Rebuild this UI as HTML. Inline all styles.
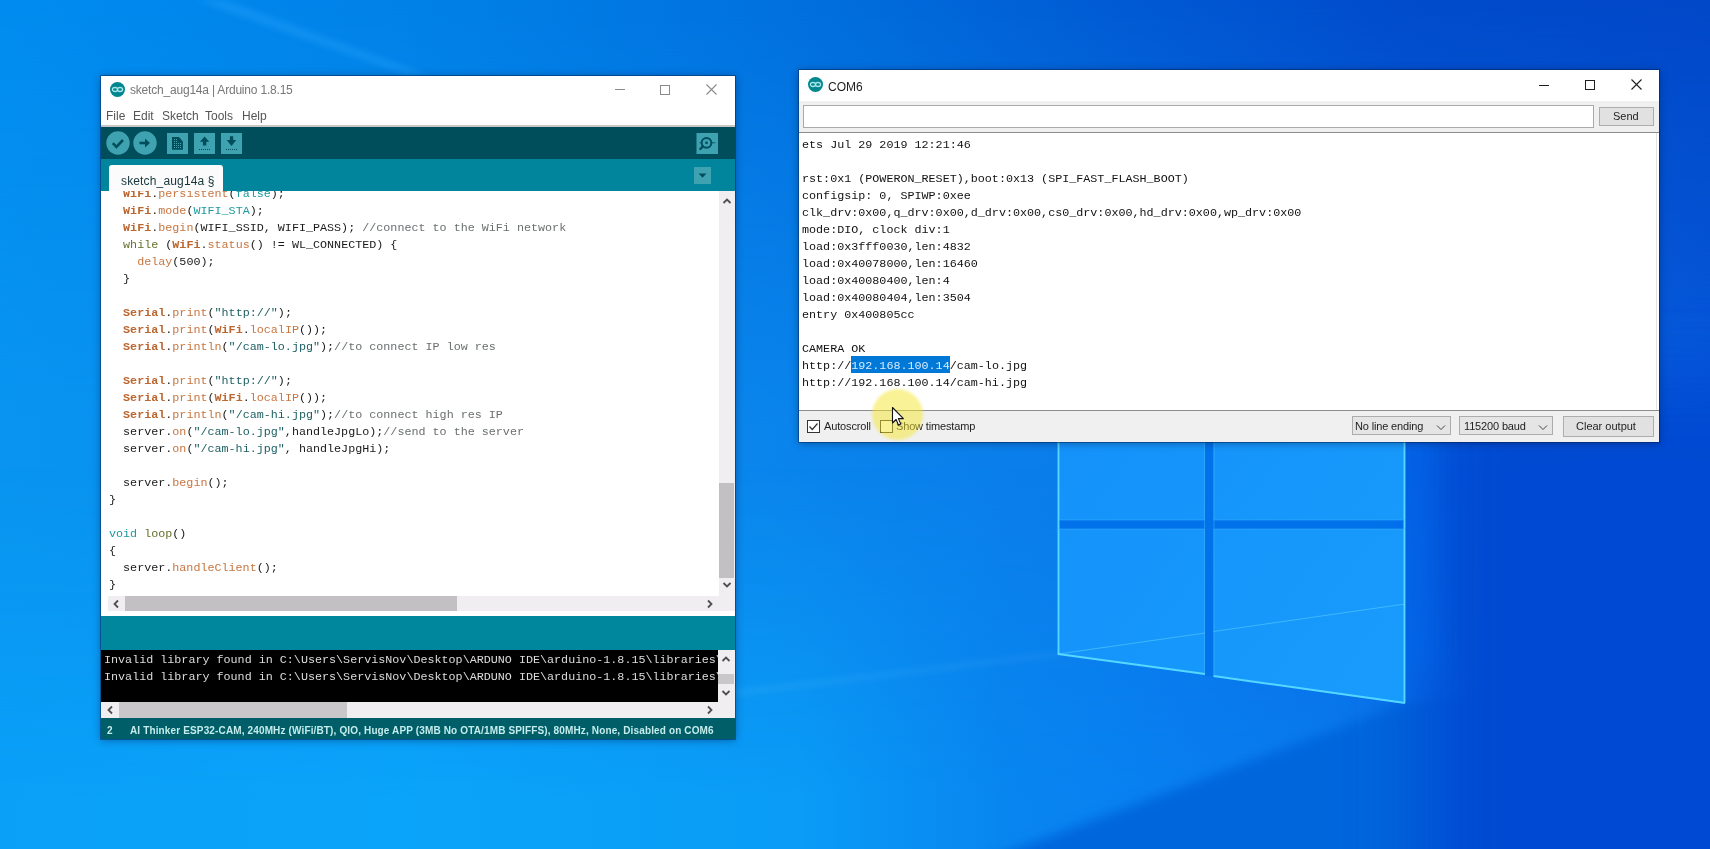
<!DOCTYPE html>
<html><head><meta charset="utf-8">
<style>
*{box-sizing:border-box}
html,body{margin:0;padding:0}
body{width:1710px;height:849px;overflow:hidden;position:relative;font-family:"Liberation Sans",sans-serif;background:#0a72dc;-webkit-font-smoothing:antialiased}
.a{position:absolute}
#ard,#com{will-change:transform}
.mono{font-family:"Liberation Mono",monospace;font-size:11.72px;line-height:17px;white-space:pre}
.sans{font-family:"Liberation Sans",sans-serif;white-space:pre}
/* code colours */
.k{color:#bc6630;font-weight:bold}
.f{color:#c87640}
.l{color:#1a9a9e}
.s{color:#1d5f62}
.c{color:#6a6f70}
.p{color:#66702a}
</style></head><body>

<!-- ============ WALLPAPER ============ -->
<svg class="a" style="left:0;top:0" width="1710" height="849" viewBox="0 0 1710 849">
  <defs>
    <linearGradient id="gTop" gradientUnits="userSpaceOnUse" x1="0" y1="0" x2="1710" y2="0">
      <stop offset="0" stop-color="rgb(0,140,240)"/>
      <stop offset="0.234" stop-color="rgb(0,130,232)"/>
      <stop offset="0.468" stop-color="rgb(0,112,222)"/>
      <stop offset="0.643" stop-color="rgb(0,92,212)"/>
      <stop offset="0.819" stop-color="rgb(0,76,204)"/>
      <stop offset="1" stop-color="rgb(0,72,200)"/>
    </linearGradient>
    <linearGradient id="gMid" gradientUnits="userSpaceOnUse" x1="0" y1="0" x2="1710" y2="0">
      <stop offset="0" stop-color="rgb(8,148,240)"/>
      <stop offset="0.234" stop-color="rgb(8,142,238)"/>
      <stop offset="0.468" stop-color="rgb(10,132,236)"/>
      <stop offset="0.643" stop-color="rgb(10,124,234)"/>
      <stop offset="0.822" stop-color="rgb(10,104,228)"/>
      <stop offset="1" stop-color="rgb(6,90,220)"/>
    </linearGradient>
    <linearGradient id="gBot" gradientUnits="userSpaceOnUse" x1="0" y1="0" x2="1710" y2="0">
      <stop offset="0" stop-color="rgb(10,160,248)"/>
      <stop offset="0.234" stop-color="rgb(10,164,250)"/>
      <stop offset="0.468" stop-color="rgb(10,156,246)"/>
      <stop offset="0.585" stop-color="rgb(8,134,240)"/>
      <stop offset="0.702" stop-color="rgb(8,126,240)"/>
      <stop offset="0.822" stop-color="rgb(8,120,236)"/>
      <stop offset="1" stop-color="rgb(8,110,230)"/>
    </linearGradient>
    <linearGradient id="mMid" gradientUnits="userSpaceOnUse" x1="0" y1="0" x2="0" y2="849">
      <stop offset="0" stop-color="#fff" stop-opacity="0"/>
      <stop offset="0.5" stop-color="#fff" stop-opacity="1"/>
      <stop offset="1" stop-color="#fff" stop-opacity="1"/>
    </linearGradient>
    <linearGradient id="mBot" gradientUnits="userSpaceOnUse" x1="0" y1="0" x2="0" y2="849">
      <stop offset="0" stop-color="#fff" stop-opacity="0"/>
      <stop offset="0.55" stop-color="#fff" stop-opacity="0"/>
      <stop offset="0.94" stop-color="#fff" stop-opacity="1"/>
      <stop offset="1" stop-color="#fff" stop-opacity="1"/>
    </linearGradient>
    <mask id="maskMid"><rect width="1710" height="849" fill="url(#mMid)"/></mask>
    <mask id="maskBot"><rect width="1710" height="849" fill="url(#mBot)"/></mask>
    <linearGradient id="pane" gradientUnits="userSpaceOnUse" x1="1058" y1="450" x2="1405" y2="700">
      <stop offset="0" stop-color="rgb(20,146,250)"/>
      <stop offset="1" stop-color="rgb(24,156,252)"/>
    </linearGradient>
    <filter id="blur3" x="-20%" y="-20%" width="140%" height="140%"><feGaussianBlur stdDeviation="3"/></filter>
    <filter id="blur60" x="-50%" y="-50%" width="200%" height="200%"><feGaussianBlur stdDeviation="38"/></filter>
    <filter id="blur6" x="-20%" y="-20%" width="140%" height="140%"><feGaussianBlur stdDeviation="6"/></filter>
    <filter id="blur12" x="-100%" y="-50%" width="300%" height="200%"><feGaussianBlur stdDeviation="12"/></filter>
    <filter id="blur1"><feGaussianBlur stdDeviation="0.7"/></filter>
  </defs>
  <rect width="1710" height="849" fill="url(#gTop)"/>
  <rect width="1710" height="849" fill="url(#gMid)" mask="url(#maskMid)"/>
  <rect width="1710" height="849" fill="url(#gBot)" mask="url(#maskBot)"/>
  <!-- faint light streaks top-left -->
  <polygon points="195,0 225,0 430,76 410,76" fill="#2aa8ff" opacity="0.35" filter="url(#blur3)"/>
  <!-- floor: dark wedge right of beam -->
  <polygon points="1405,703 1760,650 1760,900 880,900" fill="rgb(6,102,220)" filter="url(#blur6)"/>
  <!-- right dark region -->
  <rect x="1425" y="380" width="400" height="600" fill="rgb(4,74,210)" filter="url(#blur60)"/>
  <!-- floor beam line -->
  <polygon points="735,690 1058,652 1058,656 735,696" fill="#7ad8ff" opacity="0.12" filter="url(#blur3)"/>
  <!-- logo gaps -->
  <rect x="1205" y="300" width="8.5" height="376" fill="rgb(2,114,234)"/>
  <rect x="1058" y="520" width="347" height="9" fill="rgb(2,114,234)"/>
  <rect x="1395" y="420" width="40" height="250" fill="rgb(6,104,238)" opacity="0.45" filter="url(#blur12)"/>
  <!-- logo panes -->
  <polygon points="1058,380 1205,355 1205,520 1058,520" fill="url(#pane)"/>
  <polygon points="1213.5,352 1405,320 1405,520 1213.5,520" fill="url(#pane)"/>
  <polygon points="1058,529 1205,529 1205,674 1058,654" fill="url(#pane)"/>
  <polygon points="1213.5,529 1405,529 1405,703 1213.5,676" fill="url(#pane)"/>
  <g filter="url(#blur1)">
  <g stroke="#5adcff" stroke-width="1.9" fill="none" opacity="0.95">
    <line x1="1058.5" y1="380" x2="1058.5" y2="655"/>
    <line x1="1058" y1="654" x2="1205" y2="674"/>
    <line x1="1213.5" y1="676" x2="1405" y2="703"/>
    <line x1="1404.5" y1="320" x2="1404.5" y2="703"/>
  </g>
  <g stroke="#40b8ff" stroke-width="1.1" fill="none" opacity="0.45">
    <line x1="1204.5" y1="355" x2="1204.5" y2="674"/>
    <line x1="1214" y1="352" x2="1214" y2="676"/>
    <line x1="1058" y1="520" x2="1205" y2="520"/>
    <line x1="1213.5" y1="520" x2="1405" y2="520"/>
    <line x1="1058" y1="529" x2="1205" y2="529"/>
    <line x1="1213.5" y1="529" x2="1405" y2="529"/>
  </g>
  <g stroke="#6fdcff" stroke-width="1" opacity="0.45">
    <line x1="1058" y1="654" x2="1205" y2="633"/>
    <line x1="1213.5" y1="631.5" x2="1405" y2="604"/>
  </g>
  </g>
</svg>

<!-- ============ ARDUINO WINDOW ============ -->
<div id="ard" class="a" style="left:101px;top:76px;width:634px;height:663px;background:#fff;box-shadow:0 0 0 1px rgba(0,30,80,.45),0 1px 8px rgba(0,20,60,.45);overflow:hidden">
  <!-- title bar -->
  <svg class="a" style="left:9px;top:6px" width="15" height="15" viewBox="0 0 15 15">
    <circle cx="7.5" cy="7.5" r="7.5" fill="#00868e"/>
    <ellipse cx="5" cy="7.5" rx="2.6" ry="2" fill="none" stroke="#a8e6ea" stroke-width="1.3"/>
    <ellipse cx="10" cy="7.5" rx="2.6" ry="2" fill="none" stroke="#a8e6ea" stroke-width="1.3"/>
  </svg>
  <div class="a sans" style="left:29px;top:6px;font-size:12px;line-height:16px;color:#777;letter-spacing:-0.2px">sketch_aug14a | Arduino 1.8.15</div>
  <div class="a" style="left:514px;top:13px;width:10px;height:1px;background:#8a8a8a"></div>
  <div class="a" style="left:559px;top:8.5px;width:10px;height:10px;border:1px solid #8a8a8a"></div>
  <svg class="a" style="left:605px;top:8px" width="11" height="11" viewBox="0 0 11 11"><path d="M0.5 0.5L10.5 10.5M10.5 0.5L0.5 10.5" stroke="#8a8a8a" stroke-width="1.1"/></svg>
  <!-- menu -->
  <div class="a sans" style="left:5px;top:32px;font-size:12px;line-height:16px;color:#555">File</div>
  <div class="a sans" style="left:32px;top:32px;font-size:12px;line-height:16px;color:#555">Edit</div>
  <div class="a sans" style="left:61px;top:32px;font-size:12px;line-height:16px;color:#555">Sketch</div>
  <div class="a sans" style="left:104px;top:32px;font-size:12px;line-height:16px;color:#555">Tools</div>
  <div class="a sans" style="left:141px;top:32px;font-size:12px;line-height:16px;color:#555">Help</div>
  <div class="a" style="left:0;top:49px;width:634px;height:1.5px;background:#c9c6c6"></div>
  <!-- toolbar -->
  <div class="a" style="left:0;top:50.5px;width:634px;height:32px;background:#004e5b"></div>
  <svg class="a" style="left:0;top:50px" width="634" height="33" viewBox="0 0 634 33">
    <circle cx="17" cy="17" r="11.7" fill="#3fa2b1"/>
    <path d="M11.8 17.2l3.6 3.6 6.6-6.8" fill="none" stroke="#004e5b" stroke-width="2.6"/>
    <circle cx="44" cy="17" r="11.7" fill="#3fa2b1"/>
    <path d="M38.5 17h7.5" stroke="#004e5b" stroke-width="2.6"/><path d="M44 12.5l5 4.5-5 4.5z" fill="#004e5b"/>
    <rect x="66" y="7" width="21" height="21" fill="#3fa2b1"/>
    <path d="M71 11h6.9l4 4.5v8.3h-10.9z" fill="#004e5b"/>
    <g fill="#3fa2b1"><rect x="73" y="13" width="1" height="1"/><rect x="75" y="13" width="1" height="1"/><rect x="73" y="15" width="1" height="1"/><rect x="75" y="15" width="1" height="1"/><rect x="73" y="17" width="1" height="1"/><rect x="75" y="17" width="1" height="1"/><rect x="77" y="17" width="1" height="1"/><rect x="79" y="17" width="1" height="1"/><rect x="73" y="19" width="1" height="1"/><rect x="75" y="19" width="1" height="1"/><rect x="77" y="19" width="1" height="1"/><rect x="79" y="19" width="1" height="1"/><rect x="73" y="21" width="1" height="1"/><rect x="75" y="21" width="1" height="1"/><rect x="77" y="21" width="1" height="1"/><rect x="79" y="21" width="1" height="1"/></g>
    <rect x="93" y="7" width="21" height="21" fill="#3fa2b1"/>
    <path d="M103.6 10.4l4.7 5.3h-3v3.9h-3.4v-3.9h-3z" fill="#004e5b"/>
    <g fill="#004e5b"><rect x="98" y="23" width="1" height="1"/><rect x="100" y="23" width="1" height="1"/><rect x="102" y="23" width="1" height="1"/><rect x="104" y="23" width="1" height="1"/><rect x="106" y="23" width="1" height="1"/><rect x="108" y="23" width="1" height="1"/></g>
    <rect x="120" y="7" width="21" height="21" fill="#3fa2b1"/>
    <path d="M130.5 19.9l4.8-5.8h-3.1v-3.9h-3.3v3.9h-3.2z" fill="#004e5b"/>
    <g fill="#004e5b"><rect x="125" y="23" width="1" height="1"/><rect x="127" y="23" width="1" height="1"/><rect x="129" y="23" width="1" height="1"/><rect x="131" y="23" width="1" height="1"/><rect x="133" y="23" width="1" height="1"/><rect x="135" y="23" width="1" height="1"/></g>
    <rect x="595.5" y="7" width="21.5" height="21" fill="#3fa2b1"/>
    <circle cx="605.5" cy="16.8" r="4.9" fill="none" stroke="#004e5b" stroke-width="2"/>
    <circle cx="605.5" cy="16.8" r="1.4" fill="#004e5b"/>
    <path d="M602 20.3l-2.6 2.6" stroke="#004e5b" stroke-width="2.4" stroke-linecap="round"/>
    <path d="M598.5 16.8h2M610.5 16.8h4" stroke="#004e5b" stroke-width="0.8"/>
  </svg>
  <!-- header -->
  <div class="a" style="left:0;top:82.5px;width:634px;height:33px;background:#00859c"></div>
  <div class="a" style="left:7.7px;top:89px;width:114.3px;height:27px;background:#fbfbfb;border-radius:3px 3px 0 0"></div>
  <div class="a sans" style="left:20px;top:98px;font-size:12px;line-height:14px;color:#17363a;letter-spacing:0.15px">sketch_aug14a §</div>
  <div class="a" style="left:592.7px;top:90.8px;width:17px;height:17px;background:#3fa2b1"></div>
  <svg class="a" style="left:592.7px;top:90.8px" width="17" height="17" viewBox="0 0 17 17"><path d="M4.5 6.5h8l-4 4.2z" fill="#004e5b"/></svg>
  <!-- editor -->
  <div class="a" style="left:0;top:115.3px;width:634px;height:424.9px;background:#fff;overflow:hidden">
    <div id="code" class="a mono" style="left:8px;top:-5.1px;color:#1a1a1a">  <span class="k">WiFi</span>.<span class="f">persistent</span>(<span class="l">false</span>);
  <span class="k">WiFi</span>.<span class="f">mode</span>(<span class="l">WIFI_STA</span>);
  <span class="k">WiFi</span>.<span class="f">begin</span>(WIFI_SSID, WIFI_PASS); <span class="c">//connect to the WiFi network</span>
  <span class="p">while</span> (<span class="k">WiFi</span>.<span class="f">status</span>() != WL_CONNECTED) {
    <span class="f">delay</span>(500);
  }

  <span class="k">Serial</span>.<span class="f">print</span>(<span class="s">"http://"</span>);
  <span class="k">Serial</span>.<span class="f">print</span>(<span class="k">WiFi</span>.<span class="f">localIP</span>());
  <span class="k">Serial</span>.<span class="f">println</span>(<span class="s">"/cam-lo.jpg"</span>);<span class="c">//to connect IP low res</span>

  <span class="k">Serial</span>.<span class="f">print</span>(<span class="s">"http://"</span>);
  <span class="k">Serial</span>.<span class="f">print</span>(<span class="k">WiFi</span>.<span class="f">localIP</span>());
  <span class="k">Serial</span>.<span class="f">println</span>(<span class="s">"/cam-hi.jpg"</span>);<span class="c">//to connect high res IP</span>
  server.<span class="f">on</span>(<span class="s">"/cam-lo.jpg"</span>,handleJpgLo);<span class="c">//send to the server</span>
  server.<span class="f">on</span>(<span class="s">"/cam-hi.jpg"</span>, handleJpgHi);

  server.<span class="f">begin</span>();
}

<span class="l">void</span> <span class="p">loop</span>()
{
  server.<span class="f">handleClient</span>();
}</div>
    <!-- v scrollbar -->
    <div class="a" style="left:618px;top:0;width:16px;height:404.7px;background:#f0eef0"></div>
    <div class="a" style="left:618px;top:291.4px;width:15px;height:95.3px;background:#c2c0c3"></div>
    <svg class="a" style="left:618px;top:4px" width="16" height="12" viewBox="0 0 16 12"><path d="M4.5 8l3.5-3.5 3.5 3.5" fill="none" stroke="#4f4f4f" stroke-width="1.8"/></svg>
    <svg class="a" style="left:618px;top:388px" width="16" height="12" viewBox="0 0 16 12"><path d="M4.5 4l3.5 3.5 3.5-3.5" fill="none" stroke="#4f4f4f" stroke-width="1.8"/></svg>
    <!-- h scrollbar -->
    <div class="a" style="left:7px;top:404.7px;width:627px;height:15.5px;background:#f0eef0"></div>
    <div class="a" style="left:23.7px;top:404.7px;width:332.3px;height:15.5px;background:#c2c0c3"></div>
    <svg class="a" style="left:9px;top:404.7px" width="12" height="16" viewBox="0 0 12 16"><path d="M8 4.5l-3.5 3.5 3.5 3.5" fill="none" stroke="#4f4f4f" stroke-width="1.8"/></svg>
    <svg class="a" style="left:603px;top:404.7px" width="12" height="16" viewBox="0 0 12 16"><path d="M4 4.5l3.5 3.5-3.5 3.5" fill="none" stroke="#4f4f4f" stroke-width="1.8"/></svg>
  </div>
  <!-- notice bar -->
  <div class="a" style="left:0;top:540.2px;width:634px;height:34.2px;background:#00879d"></div>
  <!-- console -->
  <div class="a" style="left:0;top:574.4px;width:634px;height:51.2px;background:#000;overflow:hidden">
    <div class="a mono" style="left:3px;top:2px;color:#dcdcdc">Invalid library found in C:\Users\ServisNov\Desktop\ARDUNO IDE\arduino-1.8.15\libraries\
Invalid library found in C:\Users\ServisNov\Desktop\ARDUNO IDE\arduino-1.8.15\libraries\</div>
    <div class="a" style="left:617px;top:0;width:17px;height:51.2px;background:#f0eef0"></div>
    <div class="a" style="left:617px;top:23.6px;width:16px;height:10px;background:#c9c7ca"></div>
    <svg class="a" style="left:617px;top:3px" width="16" height="12" viewBox="0 0 16 12"><path d="M4.5 8l3.5-3.5 3.5 3.5" fill="none" stroke="#4f4f4f" stroke-width="1.8"/></svg>
    <svg class="a" style="left:617px;top:37px" width="16" height="12" viewBox="0 0 16 12"><path d="M4.5 4l3.5 3.5 3.5-3.5" fill="none" stroke="#4f4f4f" stroke-width="1.8"/></svg>
  </div>
  <div class="a" style="left:0;top:625.6px;width:634px;height:16.2px;background:#f0eef0"></div>
  <div class="a" style="left:18px;top:625.6px;width:228px;height:16.2px;background:#c9c7ca"></div>
  <svg class="a" style="left:3px;top:625.6px" width="12" height="16" viewBox="0 0 12 16"><path d="M8 4.5l-3.5 3.5 3.5 3.5" fill="none" stroke="#4f4f4f" stroke-width="1.8"/></svg>
  <svg class="a" style="left:603px;top:625.6px" width="12" height="16" viewBox="0 0 12 16"><path d="M4 4.5l3.5 3.5-3.5 3.5" fill="none" stroke="#4f4f4f" stroke-width="1.8"/></svg>
  <!-- status bar -->
  <div class="a" style="left:0;top:641.8px;width:634px;height:21.2px;background:#005e69"></div>
  <div class="a sans" style="left:6px;top:647.5px;font-size:10px;font-weight:bold;line-height:13px;color:#c4ecec">2</div>
  <div class="a sans" style="left:29px;top:647.5px;font-size:10px;font-weight:bold;letter-spacing:0.14px;line-height:13px;color:#c4ecec">AI Thinker ESP32-CAM, 240MHz (WiFi/BT), QIO, Huge APP (3MB No OTA/1MB SPIFFS), 80MHz, None, Disabled on COM6</div>
</div>

<!-- ============ COM6 WINDOW ============ -->
<div id="com" class="a" style="left:799px;top:70px;width:860px;height:372px;background:#fff;box-shadow:0 0 0 1px rgba(0,30,80,.45),0 1px 8px rgba(0,20,60,.45);overflow:hidden">
  <svg class="a" style="left:8.5px;top:7.3px" width="15" height="15" viewBox="0 0 15 15">
    <circle cx="7.5" cy="7.5" r="7.5" fill="#00868e"/>
    <ellipse cx="5" cy="7.5" rx="2.6" ry="2" fill="none" stroke="#a8e6ea" stroke-width="1.3"/>
    <ellipse cx="10" cy="7.5" rx="2.6" ry="2" fill="none" stroke="#a8e6ea" stroke-width="1.3"/>
  </svg>
  <div class="a sans" style="left:29px;top:8.5px;font-size:12px;line-height:16px;color:#1e1e1e">COM6</div>
  <div class="a" style="left:740px;top:14.5px;width:10px;height:1px;background:#1e1e1e"></div>
  <div class="a" style="left:786px;top:9.5px;width:10px;height:10px;border:1px solid #1e1e1e"></div>
  <svg class="a" style="left:831.5px;top:9.3px" width="11" height="11" viewBox="0 0 11 11"><path d="M0.5 0.5L10.5 10.5M10.5 0.5L0.5 10.5" stroke="#1e1e1e" stroke-width="1.1"/></svg>
  <!-- top panel -->
  <div class="a" style="left:0;top:31px;width:860px;height:31px;background:#f0f0f0"></div>
  <div class="a" style="left:4px;top:34.5px;width:790.5px;height:23.3px;background:#fff;border:1px solid #a9a9a9"></div>
  <div class="a" style="left:800px;top:36.5px;width:54.7px;height:19.7px;background:#e1e1e1;border:1px solid #adadad"></div>
  <div class="a sans" style="left:814px;top:39px;font-size:11px;line-height:14px;color:#1e1e1e">Send</div>
  <div class="a" style="left:0;top:62px;width:860px;height:1px;background:#8c8c8c"></div>
  <!-- text area -->
  <div class="a" style="left:0;top:63px;width:860px;height:277px;background:#fff;overflow:hidden">
    <div class="a" style="left:52.3px;top:223.3px;width:99px;height:17px;background:#0078d7"></div>
    <div class="a mono" style="left:3px;top:3.5px;color:#111">ets Jul 29 2019 12:21:46

rst:0x1 (POWERON_RESET),boot:0x13 (SPI_FAST_FLASH_BOOT)
configsip: 0, SPIWP:0xee
clk_drv:0x00,q_drv:0x00,d_drv:0x00,cs0_drv:0x00,hd_drv:0x00,wp_drv:0x00
mode:DIO, clock div:1
load:0x3fff0030,len:4832
load:0x40078000,len:16460
load:0x40080400,len:4
load:0x40080404,len:3504
entry 0x400805cc

CAMERA OK
http://<span style="color:#d8ecff">192.168.100.14</span>/cam-lo.jpg
http://192.168.100.14/cam-hi.jpg</div>
  </div>
  <div class="a" style="left:857px;top:63px;width:1px;height:277px;background:#e2e2e2"></div>
  <div class="a" style="left:0;top:340px;width:860px;height:1px;background:#8c8c8c"></div>
  <!-- bottom panel -->
  <div class="a" style="left:0;top:341px;width:860px;height:31px;background:#f0f0f0"></div>
  <div class="a" style="left:8.2px;top:350px;width:13px;height:13px;border:1px solid #333;background:#fff"></div>
  <svg class="a" style="left:8.2px;top:350px" width="13" height="13" viewBox="0 0 13 13"><path d="M2.5 6.5l2.8 3 5.2-6" fill="none" stroke="#333" stroke-width="1.2"/></svg>
  <div class="a sans" style="left:25px;top:349px;font-size:11px;line-height:14px;color:#1e1e1e;letter-spacing:-0.15px">Autoscroll</div>
  <div class="a" style="left:81px;top:350px;width:12.5px;height:12.5px;border:1px solid #333;background:#fff"></div>
  <div class="a sans" style="left:97px;top:349px;font-size:11px;line-height:14px;color:#1e1e1e;letter-spacing:-0.15px">Show timestamp</div>
  <div class="a" style="left:553.3px;top:346.3px;width:98.6px;height:19.1px;background:#e5e5e5;border:1px solid #acacac"></div>
  <div class="a sans" style="left:556px;top:349px;font-size:11px;line-height:14px;color:#1e1e1e;letter-spacing:-0.15px">No line ending</div>
  <svg class="a" style="left:637px;top:354px" width="10" height="7" viewBox="0 0 10 7"><path d="M1 1.5l4 4 4-4" fill="none" stroke="#444" stroke-width="1"/></svg>
  <div class="a" style="left:660.3px;top:346.3px;width:93.7px;height:19.1px;background:#e5e5e5;border:1px solid #acacac"></div>
  <div class="a sans" style="left:665px;top:349px;font-size:11px;line-height:14px;color:#1e1e1e;letter-spacing:-0.15px">115200 baud</div>
  <svg class="a" style="left:739px;top:354px" width="10" height="7" viewBox="0 0 10 7"><path d="M1 1.5l4 4 4-4" fill="none" stroke="#444" stroke-width="1"/></svg>
  <div class="a" style="left:763.6px;top:346.1px;width:91.1px;height:20.6px;background:#e1e1e1;border:1px solid #adadad"></div>
  <div class="a sans" style="left:777px;top:348.5px;font-size:11px;line-height:14px;color:#1e1e1e">Clear output</div>
</div>

<!-- cursor highlight -->
<div class="a" style="left:869.8px;top:387.3px;width:55px;height:55px;border-radius:50%;background:radial-gradient(circle closest-side,rgba(245,229,45,.5) 0%,rgba(245,229,45,.5) 84%,rgba(245,229,45,0) 100%)"></div>
<svg class="a" style="left:891px;top:406px" width="14" height="22" viewBox="0 0 14 22">
  <path d="M1.5 1.5v15.5l3.6-3.5 2.4 5.6 2.3-1-2.4-5.5h5z" fill="#fff" stroke="#111" stroke-width="1.1" stroke-linejoin="round"/>
</svg>

</body></html>
